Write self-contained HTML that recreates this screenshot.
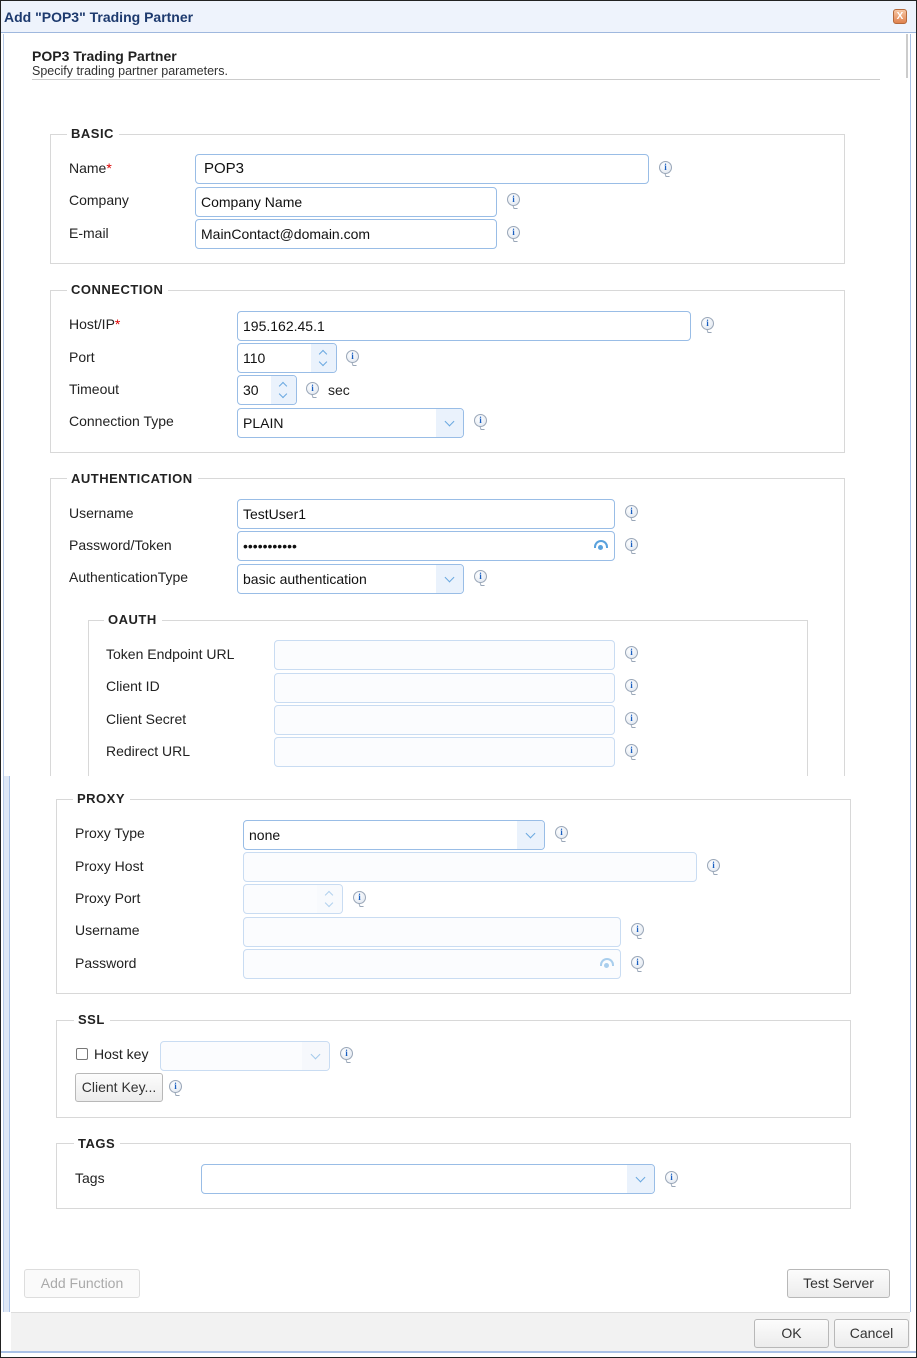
<!DOCTYPE html>
<html><head><meta charset="utf-8"><style>
*{box-sizing:border-box}
body{margin:0;width:917px;height:1358px;position:relative;overflow:hidden;font-family:"Liberation Sans",Arial,sans-serif;font-size:14px;color:#222;background:#fff}
.a{position:absolute}
.lbl{position:absolute;font-size:14px;color:#222}
.in{position:absolute;height:30px;border:1px solid #99bde6;border-radius:4px;background:#fff;padding:0 5px;line-height:28px;font-size:14px;color:#111}
.dis{border-color:#c9dcf2;background:#fbfcfe}
.fs{position:absolute;border:1px solid #d8d8d8}
.lg{position:absolute;background:#fff;padding:0 5px 0 4px;font-weight:bold;font-size:13px;letter-spacing:.5px;color:#222;line-height:16px}
.info{position:absolute;width:13px;height:13px;border-radius:50%;border:1px solid #9aa7b8;background:radial-gradient(circle at 40% 35%,#fff,#dde4ee);font:bold 9px "Liberation Serif",serif;color:#1a5fc0;text-align:center;line-height:11px}
.info:after{content:"";position:absolute;left:5px;top:11px;width:3px;height:3px;border-left:1px solid #9aa7b8;border-bottom:1px solid #9aa7b8;transform:skewX(20deg)}
.dd{position:absolute;top:0;right:0;bottom:0;width:27px;background:#eaf2fc;border-radius:0 3px 3px 0}
.dd:after{content:"";position:absolute;left:10px;top:9px;width:6px;height:6px;border-right:1.5px solid #6aa8e0;border-bottom:1.5px solid #6aa8e0;transform:rotate(45deg)}
.sp{position:absolute;top:0;right:0;bottom:0;width:25px;background:#eaf2fc;border-radius:0 3px 3px 0}
.sp:before,.sp:after{content:"";position:absolute;left:9px;width:5px;height:5px;border-right:1.5px solid #6aa8e0;border-bottom:1.5px solid #6aa8e0}
.sp:before{top:7px;transform:rotate(-135deg)}
.sp:after{top:15px;transform:rotate(45deg)}
.btn{position:absolute;height:29px;border:1px solid #b8b8b8;border-radius:3px;background:linear-gradient(#fcfcfc,#ececec);text-align:center;line-height:27px;font-size:14px;color:#333}
.req{color:#d00}
.eye{position:absolute;right:6px;top:8px;width:14px;height:8px;border:2.5px solid #5aa2dd;border-bottom:none;border-radius:8px 8px 0 0}
.eye:after{content:"";position:absolute;left:2px;top:3px;width:5px;height:5px;border-radius:50%;background:#5aa2dd}
</style></head><body>
<!-- frame -->
<div class="a" style="left:0;top:0;width:917px;height:1358px;border:1px solid #222"></div>
<div class="a" style="left:1px;top:1px;width:915px;height:32px;background:#eef3fc;border-bottom:1px solid #9fb8de"></div>
<div class="a" style="left:4px;top:9px;font-size:14px;font-weight:bold;color:#1d3a6e">Add "POP3" Trading Partner</div>
<div class="a" style="left:893px;top:9px;width:14px;height:15px;border-radius:3px;background:linear-gradient(#f7c7a5,#e0824e);border:1px solid #b5693b;color:#fff;font:bold 10px 'Liberation Sans';text-align:center;line-height:13px">X</div>
<div class="a" style="left:1px;top:34px;width:3px;height:1278px;background:#fff;border-right:1px solid #b8cbe8"></div>
<div class="a" style="left:4px;top:776px;width:6px;height:536px;background:#dfe8f6;border-right:1px solid #a9c1e6"></div>
<div class="a" style="left:906px;top:34px;width:2px;height:44px;background:#ccc"></div>
<div class="a" style="left:910px;top:34px;width:1px;height:1278px;background:#a9c1e6"></div>
<div class="a" style="left:32px;top:48px;font-weight:bold;font-size:14px">POP3 Trading Partner</div>
<div class="a" style="left:32px;top:64px;font-size:12.5px;color:#333">Specify trading partner parameters.</div>
<div class="a" style="left:32px;top:79px;width:848px;height:1px;background:#ccc"></div>

<!-- BASIC -->
<div class="fs" style="left:50px;top:134px;width:795px;height:130px"></div>
<div class="lg" style="left:67px;top:126px">BASIC</div>
<div class="lbl" style="left:69px;top:160px">Name<span class="req">*</span></div>
<div class="in" style="left:195px;top:154px;width:454px;font-size:15px;padding-left:8px">POP3</div><div class="info" style="left:659px;top:161px">i</div>
<div class="lbl" style="left:69px;top:192px">Company</div>
<div class="in" style="left:195px;top:187px;width:302px">Company Name</div><div class="info" style="left:507px;top:193px">i</div>
<div class="lbl" style="left:69px;top:225px">E-mail</div>
<div class="in" style="left:195px;top:219px;width:302px">MainContact@domain.com</div><div class="info" style="left:507px;top:226px">i</div>

<!-- CONNECTION -->
<div class="fs" style="left:50px;top:290px;width:795px;height:163px"></div>
<div class="lg" style="left:67px;top:282px">CONNECTION</div>
<div class="lbl" style="left:69px;top:316px">Host/IP<span class="req">*</span></div>
<div class="in" style="left:237px;top:311px;width:454px">195.162.45.1</div><div class="info" style="left:701px;top:317px">i</div>
<div class="lbl" style="left:69px;top:349px">Port</div>
<div class="in" style="left:237px;top:343px;width:100px">110<div class="sp"></div></div><div class="info" style="left:346px;top:350px">i</div>
<div class="lbl" style="left:69px;top:381px">Timeout</div>
<div class="in" style="left:237px;top:375px;width:60px">30<div class="sp"></div></div><div class="info" style="left:306px;top:382px">i</div>
<div class="lbl" style="left:328px;top:382px">sec</div>
<div class="lbl" style="left:69px;top:413px">Connection Type</div>
<div class="in" style="left:237px;top:408px;width:227px">PLAIN<div class="dd"></div></div><div class="info" style="left:474px;top:414px">i</div>

<!-- AUTH -->
<div class="fs" style="left:50px;top:478px;width:795px;height:310px;border-bottom:none"></div>
<div class="lg" style="left:67px;top:471px">AUTHENTICATION</div>
<div class="lbl" style="left:69px;top:505px">Username</div>
<div class="in" style="left:237px;top:499px;width:378px">TestUser1</div><div class="info" style="left:625px;top:505px">i</div>
<div class="lbl" style="left:69px;top:537px">Password/Token</div>
<div class="in" style="left:237px;top:531px;width:378px;letter-spacing:0px">•••••••••••<div class="eye"></div></div><div class="info" style="left:625px;top:538px">i</div>
<div class="lbl" style="left:69px;top:569px">AuthenticationType</div>
<div class="in" style="left:237px;top:564px;width:227px">basic authentication<div class="dd"></div></div><div class="info" style="left:474px;top:570px">i</div>

<div class="fs" style="left:88px;top:620px;width:720px;height:170px;border-bottom:none"></div>
<div class="lg" style="left:104px;top:612px">OAUTH</div>
<div class="lbl" style="left:106px;top:646px">Token Endpoint URL</div>
<div class="in dis" style="left:274px;top:640px;width:341px"></div><div class="info" style="left:625px;top:646px">i</div>
<div class="lbl" style="left:106px;top:678px">Client ID</div>
<div class="in dis" style="left:274px;top:673px;width:341px"></div><div class="info" style="left:625px;top:679px">i</div>
<div class="lbl" style="left:106px;top:711px">Client Secret</div>
<div class="in dis" style="left:274px;top:705px;width:341px"></div><div class="info" style="left:625px;top:712px">i</div>
<div class="lbl" style="left:106px;top:743px">Redirect URL</div>
<div class="in dis" style="left:274px;top:737px;width:341px"></div><div class="info" style="left:625px;top:744px">i</div>
<div class="a" style="left:11px;top:776px;width:899px;height:22px;background:#fff"></div>

<!-- PROXY -->
<div class="fs" style="left:56px;top:799px;width:795px;height:195px"></div>
<div class="lg" style="left:73px;top:791px">PROXY</div>
<div class="lbl" style="left:75px;top:825px">Proxy Type</div>
<div class="in" style="left:243px;top:820px;width:302px">none<div class="dd"></div></div><div class="info" style="left:555px;top:826px">i</div>
<div class="lbl" style="left:75px;top:858px">Proxy Host</div>
<div class="in dis" style="left:243px;top:852px;width:454px"></div><div class="info" style="left:707px;top:859px">i</div>
<div class="lbl" style="left:75px;top:890px">Proxy Port</div>
<div class="in dis" style="left:243px;top:884px;width:100px"><div class="sp" style="background:#f6f9fd;opacity:.5"></div></div><div class="info" style="left:353px;top:891px">i</div>
<div class="lbl" style="left:75px;top:922px">Username</div>
<div class="in dis" style="left:243px;top:917px;width:378px"></div><div class="info" style="left:631px;top:923px">i</div>
<div class="lbl" style="left:75px;top:955px">Password</div>
<div class="in dis" style="left:243px;top:949px;width:378px"><div class="eye" style="opacity:.5"></div></div><div class="info" style="left:631px;top:956px">i</div>

<!-- SSL -->
<div class="fs" style="left:56px;top:1020px;width:795px;height:98px"></div>
<div class="lg" style="left:74px;top:1012px">SSL</div>
<div class="a" style="left:76px;top:1048px;width:12px;height:12px;border:1px solid #777;border-radius:2px"></div>
<div class="lbl" style="left:94px;top:1046px">Host key</div>
<div class="in dis" style="left:160px;top:1041px;width:170px"><div class="dd" style="background:#f3f7fc;opacity:.6"></div></div><div class="info" style="left:340px;top:1047px">i</div>
<div class="btn" style="left:75px;top:1073px;width:88px">Client Key...</div><div class="info" style="left:169px;top:1080px">i</div>

<!-- TAGS -->
<div class="fs" style="left:56px;top:1143px;width:795px;height:66px"></div>
<div class="lg" style="left:74px;top:1136px">TAGS</div>
<div class="lbl" style="left:75px;top:1170px">Tags</div>
<div class="in" style="left:201px;top:1164px;width:454px"><div class="dd"></div></div><div class="info" style="left:665px;top:1171px">i</div>

<!-- buttons -->
<div class="btn" style="left:24px;top:1269px;width:116px;color:#aaa;border-color:#ddd;background:#fafafa">Add Function</div>
<div class="btn" style="left:787px;top:1269px;width:103px">Test Server</div>
<div class="a" style="left:11px;top:1312px;width:899px;height:39px;background:#f2f2f2;border-top:1px solid #ddd"></div>
<div class="a" style="left:1px;top:1351px;width:915px;height:2px;background:#a9c1e6"></div>
<div class="btn" style="left:754px;top:1319px;width:75px">OK</div>
<div class="btn" style="left:834px;top:1319px;width:75px">Cancel</div>
</body></html>
